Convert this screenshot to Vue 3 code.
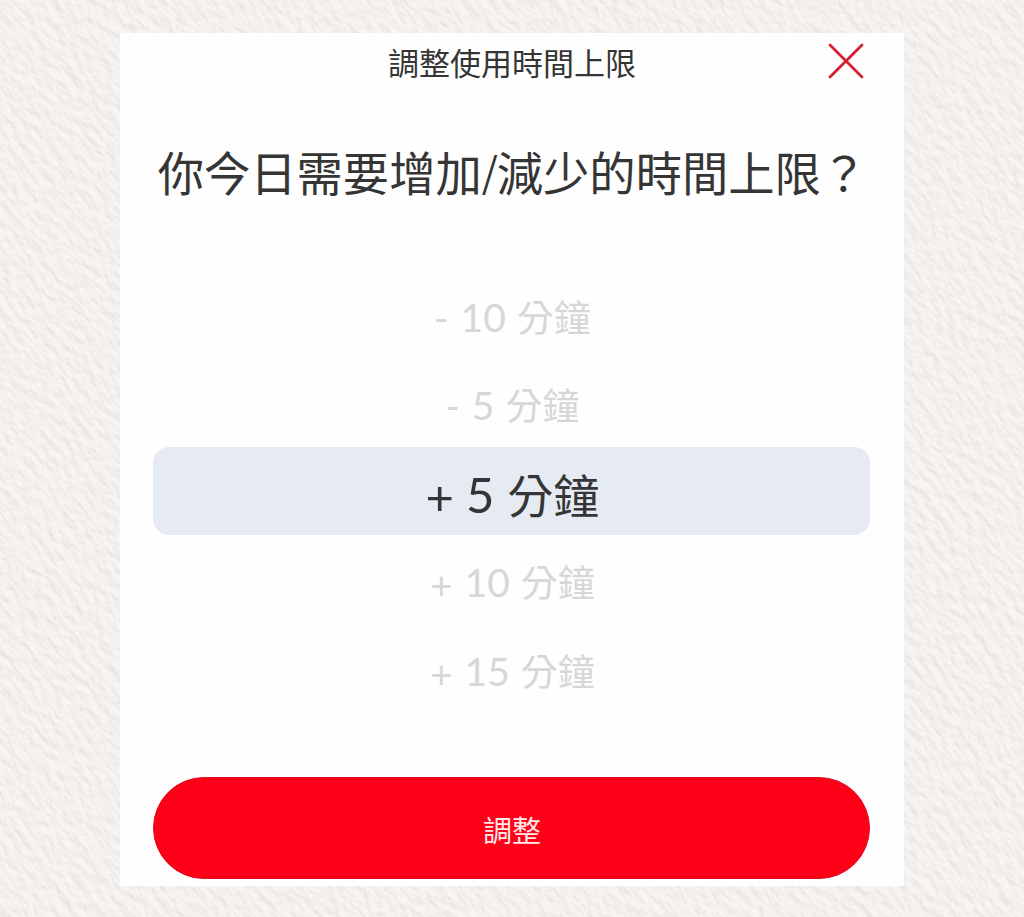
<script setup>
const options = [
  { sign: '-', value: '10' },
  { sign: '-', value: '5' },
  { sign: '+', value: '5', selected: true },
  { sign: '+', value: '10' },
  { sign: '+', value: '15' },
]
</script>

<template>
  <div class="page">
    <svg class="paper" width="1024" height="917" aria-hidden="true">
      <filter id="grain" x="0" y="0" width="100%" height="100%" color-interpolation-filters="sRGB">
        <feTurbulence type="fractalNoise" baseFrequency="0.075 0.14" numOctaves="4" seed="8" result="noise" />
        <feDiffuseLighting in="noise" lighting-color="#fffbf8" surfaceScale="0.8" diffuseConstant="1.13">
          <feDistantLight azimuth="65" elevation="58" />
        </feDiffuseLighting>
      </filter>
      <rect class="grain" x="-300" y="-300" width="1650" height="1550" transform="rotate(55 512 458)" filter="url(#grain)" />
    </svg>

    <main class="card">
      <header class="bar">
        <span class="bar-title">調整使用時間上限</span>
        <svg class="close" width="36" height="36" viewBox="0 0 36 36">
          <path d="M2 2 34 34M34 2 2 34" />
        </svg>
      </header>

      <h1 class="question">你今日需要增加<span class="slash">/</span>減少的時間上限？</h1>

      <ul class="picker">
        <li v-for="(o, i) in options" :key="i" class="option" :class="{ selected: o.selected }">
          <span class="sign" :class="{ plus: o.sign === '+' }">{{ o.sign }}</span>
          <span class="number">{{ o.value }}</span>
          <span class="unit">分鐘</span>
        </li>
      </ul>

      <button class="submit">調整</button>
    </main>
  </div>
</template>

<style>
body {
  margin: 0;
  overflow: hidden;
}
</style>

<style scoped>
.page {
  position: relative;
  box-sizing: border-box;
  width: 1024px;
  height: 917px;
  padding: 33px 120px 31px;
  overflow: hidden;
  background: #f4f0ed;
  font-family: "Noto Sans CJK TC", sans-serif;
  color: #353535;
}
.paper {
  position: absolute;
  inset: 0;
}
.grain {
  opacity: 0.34;
}
.card {
  position: relative;
  box-sizing: border-box;
  height: 853px;
  padding: 0 33.6px 7px 33.4px;
  display: flex;
  flex-direction: column;
  background: #fefefe;
}
.bar {
  display: grid;
  grid-template-columns: 1fr auto 1fr;
  align-items: center;
  height: 62px;
}
.bar-title {
  grid-column: 2;
  padding-bottom: 4px;
  font-size: 31px;
  line-height: 58px;
}
.close {
  justify-self: end;
  margin: 0 6.5px 6px 0;
}
.close path {
  fill: none;
  stroke: #d51e30;
  stroke-width: 2.8;
  stroke-linecap: round;
}
.question {
  margin: 41px 0 0;
  padding-left: 1px;
  font-size: 46.3px;
  line-height: 70px;
  font-weight: 400;
  text-align: center;
  white-space: nowrap;
}
.slash {
  display: inline-block;
  width: 15px;
  font-size: 41px;
  line-height: 40px;
  text-align: center;
  vertical-align: 3px;
}
.picker {
  margin: 66px 0 0;
  padding: 0;
  list-style: none;
}
.option {
  box-sizing: border-box;
  display: flex;
  justify-content: center;
  align-items: baseline;
  height: 88.4px;
  padding-left: 1px;
  line-height: 88.4px;
  font-size: 37px;
  color: #d7d7d7;
}
.sign,
.number {
  font-family: Lato, sans-serif;
  font-size: 39px;
}
.sign {
  margin-right: 12px;
}
.plus {
  transform: translateY(1.5px);
}
.number {
  margin-right: 11px;
}
.selected {
  margin: -2px 0 2px;
  border-radius: 16px;
  background: #e6eaf2;
  color: #353535;
  font-size: 46px;
  line-height: 92px;
}
.selected .sign,
.selected .number {
  font-size: 49px;
}
.selected .number {
  margin-right: 13px;
}
.submit {
  height: 102px;
  margin: auto 0 0;
  padding: 0;
  border: 1px solid #e00a24;
  border-radius: 51px;
  background: #ff0019;
  color: #ffebeb;
  font: 400 29px/102px "Noto Sans CJK TC", sans-serif;
}
</style>
